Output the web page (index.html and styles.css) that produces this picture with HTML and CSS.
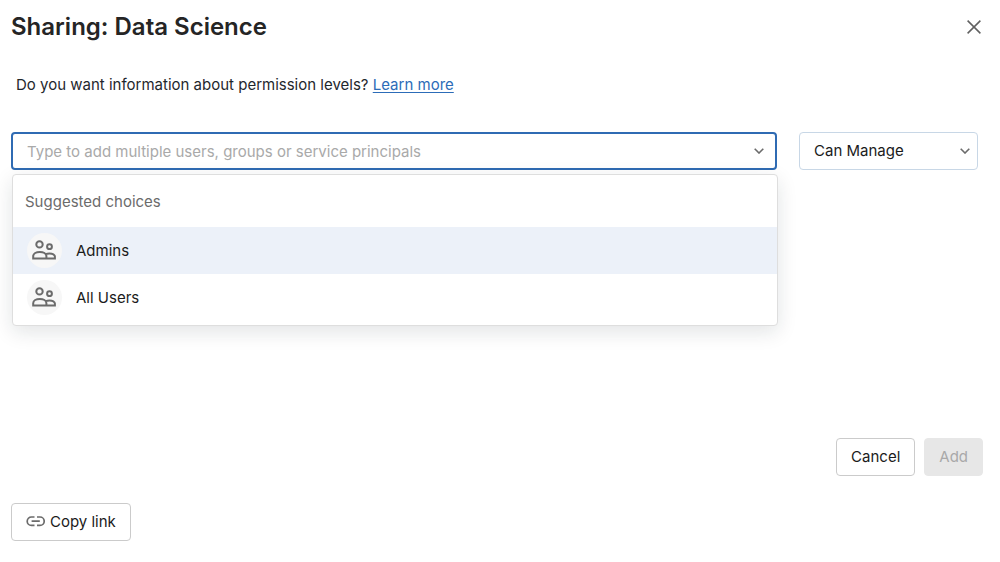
FILE: index.html
```html
<!DOCTYPE html>
<html lang="en">
<head>
<meta charset="utf-8">
<meta name="viewport" content="width=device-width, initial-scale=1">
<title>Sharing: Data Science</title>
<link rel="stylesheet" href="styles.css">
</head>
<body>
<main class="dialog" role="dialog" aria-labelledby="dialog-title">
  <header class="dialog-header">
    <h1 class="dialog-title" id="dialog-title">Sharing: Data Science</h1>
    <button class="close" type="button" aria-label="Close">
      <svg viewBox="0 0 14 14" width="14" height="14" fill="none" stroke="currentColor" stroke-width="1.5"><path d="M0.6 0.6 13.4 13.4M13.4 0.6 0.6 13.4"/></svg>
    </button>
  </header>
  <p class="info">Do you want information about permission levels? <a class="link" href="#">Learn more</a></p>
  <form class="form">
    <div class="fields">
      <div class="combo">
        <input class="combo-input" type="text" role="combobox" aria-expanded="true" aria-controls="choices" aria-label="Users, groups or service principals" placeholder="Type to add multiple users, groups or service principals">
        <svg class="chevron" viewBox="0 0 10 6" width="10" height="6" fill="none" stroke="currentColor" stroke-width="1.6"><path d="M0.7 0.7 5 5 9.3 0.7"/></svg>
        <div class="menu">
          <div class="menu-title" id="menu-title">Suggested choices</div>
          <ul class="choices" id="choices" role="listbox" aria-labelledby="menu-title">
            <li class="choice choice-active" role="option" aria-selected="true">
              <span class="avatar"><svg viewBox="0 0 25 22" width="25" height="22" fill="none" stroke="currentColor" stroke-width="2"><circle cx="7.5" cy="4.4" r="3.2"/><circle cx="17.5" cy="6.7" r="2.4"/><path d="M1.2 18.4v-2.2c0-2.500 3-4.300 6.600-4.300s6.600 1.800 6.600 4.300v2.200zM14.400 18.400h8.500v-1.800c0-1.900-2.300-3.200-5.400-3.200-1.500 0-2.800.3-3.800.8"/></svg></span>
              Admins
            </li>
            <li class="choice" role="option" aria-selected="false">
              <span class="avatar"><svg viewBox="0 0 25 22" width="25" height="22" fill="none" stroke="currentColor" stroke-width="2"><circle cx="7.5" cy="4.4" r="3.2"/><circle cx="17.5" cy="6.7" r="2.4"/><path d="M1.2 18.4v-2.2c0-2.500 3-4.300 6.600-4.300s6.600 1.800 6.600 4.300v2.200zM14.400 18.400h8.500v-1.800c0-1.900-2.300-3.200-5.400-3.200-1.500 0-2.800.3-3.800.8"/></svg></span>
              All Users
            </li>
          </ul>
        </div>
      </div>
      <div class="level">
        <select class="level-select" aria-label="Permission level">
          <option selected>Can Manage</option>
          <option>Can Edit</option>
          <option>Can Run</option>
          <option>Can View</option>
        </select>
        <svg class="chevron chevron-level" viewBox="0 0 10 6" width="10" height="6" fill="none" stroke="currentColor" stroke-width="1.6"><path d="M0.7 0.7 5 5 9.3 0.7"/></svg>
      </div>
    </div>
    <div class="actions">
      <button class="button" type="button">Cancel</button>
      <button class="button" type="submit" disabled>Add</button>
    </div>
  </form>
  <footer>
    <button class="button" type="button">
      <svg viewBox="0 0 19 12" width="19" height="12" fill="none" stroke="#6b6b6b" stroke-width="1.7"><path d="M8.500 1H5.400a4.200 4.200 0 0 0 0 8.400h3.100M11 1h3a4.200 4.200 0 0 1 0 8.400h-3M5.600 5.200h8.200"/></svg>
      Copy link
    </button>
  </footer>
</main>
</body>
</html>
```
FILE: styles.css
```css
* { box-sizing: border-box; }

body {
  margin: 0;
  background: #fff;
  color: #1b1b1b;
  font: 15px/20px Inter, "Liberation Sans", sans-serif;
}

button, input, select { font: inherit; color: inherit; }

.dialog { padding: 11px; }

.dialog-header {
  display: flex;
  align-items: center;
  justify-content: space-between;
  padding-right: 8px;
}

.dialog-title {
  margin: 0;
  font-size: 24px;
  line-height: 32px;
  font-weight: 600;
  color: #252525;
}

.close {
  display: flex;
  padding: 0;
  border: 0;
  background: none;
  color: #606060;
}

.info {
  margin: 32px 0 0;
  padding-left: 5px;
  color: #1f272d;
}

.link {
  color: #2c6cb8;
  text-decoration: underline;
  text-underline-offset: 2px;
}

.fields {
  display: flex;
  gap: 22px;
  margin-top: 37px;
  padding-right: 11px;
}

.combo { position: relative; flex: 1; }

.combo-input {
  display: block;
  width: 100%;
  height: 38px;
  padding: 0 36px 0 14px;
  border: 2px solid #2f6bb3;
  border-radius: 4px;
  background: #fff;
  outline: none;
}

.combo-input::placeholder { color: #a9a9a9; opacity: 1; }

.chevron {
  position: absolute;
  top: 16px;
  right: 13px;
  color: #6b6b6b;
  pointer-events: none;
}

.chevron-level { right: 8px; }

.level { position: relative; flex: 0 0 179px; }

.level-select {
  display: block;
  width: 100%;
  height: 38px;
  padding: 0 14px;
  border: 1px solid #c8d7e6;
  border-radius: 4px;
  background: #fff;
  appearance: none;
}

.menu {
  position: absolute;
  top: 100%;
  left: 1px;
  right: -1px;
  margin-top: 4px;
  padding-bottom: 4px;
  border: 1px solid #dedede;
  border-radius: 4px;
  background: #fff;
  box-shadow: 0 6px 20px rgba(20, 35, 40, 0.12);
}

.menu-title {
  padding: 17px 12px 15px;
  color: #6b6b6b;
}

.choices { margin: 0; padding: 0; list-style: none; }

.choice {
  display: flex;
  align-items: center;
  gap: 14px;
  padding: 6px 14px;
}

.choice-active { background: #ecf1f9; }

.avatar {
  display: grid;
  place-items: center;
  width: 35px;
  height: 35px;
  border-radius: 50%;
  background: #f7f7f7;
  color: #6b6b6b;
}

.actions {
  display: flex;
  justify-content: flex-end;
  gap: 9px;
  margin: 268px 6px 27px 0;
}

.button {
  display: flex;
  align-items: center;
  gap: 5px;
  height: 38px;
  padding: 0 14px;
  border: 1px solid #cbcbcb;
  border-radius: 4px;
  background: #fff;
}

.button:disabled {
  border-color: #e7e7e7;
  background: #e7e7e7;
  color: #a9a9a9;
}
```
